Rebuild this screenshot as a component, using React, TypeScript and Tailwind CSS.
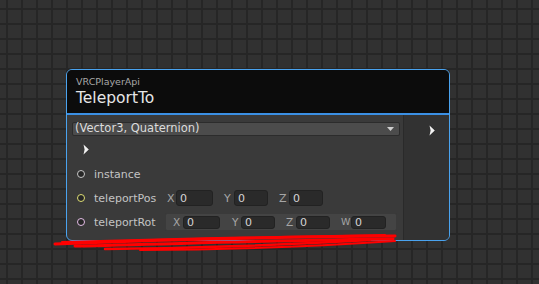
import { ReactNode } from 'react';

// graph node: VRCPlayerApi.TeleportTo

function Port({ color, children, nameWidth }: { color: string; children: ReactNode; nameWidth: string }) {
  return (
    <div className="flex items-center">
      <div className={`w-[8px] h-[8px] rounded-full border-[1.5px] bg-[#262626] ${color}`} />
      <span className={`ml-[9px] text-[11px] leading-none text-[#c4c4c4] ${nameWidth}`}>{children}</span>
    </div>
  );
}

function Field({ label, labelClass, inputWidth, height, className = '' }: { label: string; labelClass: string; inputWidth: string; height: string; className?: string }) {
  return (
    <div className={`flex items-center ${className}`}>
      <span className={`leading-none text-[#a6a6a6] ${labelClass}`}>{label}</span>
      <div className={`flex items-center pl-[3px] bg-[#2a2a2a] border border-[#222] rounded-[3px] text-[11px] leading-none text-[#d4d4d4] ${inputWidth} ${height}`}>
        0
      </div>
    </div>
  );
}

function Arrow({ className = '' }: { className?: string }) {
  return (
    <svg width="6" height="11" viewBox="0 0 6 11" className={className}>
      <polygon points="0.5,0.5 5.8,5.5 0.5,10.5 1.6,5.5" fill="#f2f2f2" />
    </svg>
  );
}

export default function App() {
  return (
    <div
      className="relative w-[539px] h-[284px] overflow-hidden bg-[#313131] bg-[image:linear-gradient(to_right,#262626_2px,transparent_2px),linear-gradient(to_bottom,#262626_2px,transparent_2px)] bg-[size:15px_15px] bg-[position:6px_8px] pt-[69px] pl-[66px]"
      style={{ fontFamily: '"DejaVu Sans", "Liberation Sans", sans-serif' }}
    >
      <div className="w-[384px] h-[172px] border border-[#4aa3ef] rounded-[6px] overflow-hidden flex flex-col bg-[#3a3a3a]">
        {/* header */}
        <div className="h-[43px] bg-[#0c0c0c] pl-[9px] pt-[7px]">
          <div className="text-[9.5px] leading-[9px] text-[#a8a8a8]">VRCPlayerApi</div>
          <div className="mt-[4px] text-[15.5px] leading-[16px] text-[#e6e6e6]">TeleportTo</div>
        </div>
        <div className="h-[2px] bg-[#3b90e4]" />

        {/* body */}
        <div className="flex flex-1">
          <div className="w-[336px] flex flex-col pt-[7px]">
            <div className="ml-[5px] mr-[3px] h-[14px] flex items-center justify-between pl-[2px] pr-[5px] bg-[#4c4c4c] border border-[#2c2c2c] rounded-[2px]">
              <span className="text-[11.5px] leading-none text-[#dcdcdc]">(Vector3, Quaternion)</span>
              <svg width="7" height="4" viewBox="0 0 7 4">
                <polygon points="0,0 7,0 3.5,4" fill="#cfcfcf" />
              </svg>
            </div>

            <Arrow className="mt-[8px] ml-[16px]" />

            <div className="mt-[12px] h-[14px] pl-[10px] flex items-center">
              <Port color="border-[#c8c8c8]" nameWidth="w-[60px]">instance</Port>
            </div>

            <div className="mt-[8px] h-[18px] pl-[10px] flex items-center">
              <Port color="border-[#dede74]" nameWidth="w-[72px]">teleportPos</Port>
              <Field label="X" labelClass="text-[11px] w-[10px] pl-[1px]" inputWidth="w-[37px]" height="h-[16px]" />
              <Field label="Y" labelClass="text-[11px] w-[10px]" inputWidth="w-[34px]" height="h-[16px]" className="ml-[11px]" />
              <Field label="Z" labelClass="text-[11px] w-[10px]" inputWidth="w-[34px]" height="h-[16px]" className="ml-[11px]" />
            </div>

            <div className="mt-[5px] h-[20px] pl-[10px] flex items-center">
              <Port color="border-[#e4bde6]" nameWidth="w-[71px]">teleportRot</Port>
              <div className="w-[232px] h-[18px] flex items-center pl-[7px] bg-[#444444] border border-[#3a3a3a] rounded-[2px]">
                <Field label="X" labelClass="text-[10.5px] w-[10px]" inputWidth="w-[37px]" height="h-[13px]" />
                <Field label="Y" labelClass="text-[10.5px] w-[9px]" inputWidth="w-[34px]" height="h-[13px]" className="ml-[12px]" />
                <Field label="Z" labelClass="text-[10.5px] w-[10px]" inputWidth="w-[34px]" height="h-[13px]" className="ml-[11px]" />
                <Field label="W" labelClass="text-[9.5px] w-[10px]" inputWidth="w-[35px]" height="h-[13px]" className="ml-[11px]" />
              </div>
            </div>
          </div>

          <div className="flex-1 bg-[#323232] border-l border-[#2a2a2a] pt-[10px] pl-[25px]">
            <Arrow />
          </div>
        </div>
      </div>

      {/* red scribble drawn over the screenshot */}
      <svg className="absolute inset-0 pointer-events-none" width="539" height="284" viewBox="0 0 539 284">
        <g fill="none" stroke="#ff0000" strokeLinecap="round">
          <path d="M55 244 C150 240 280 237 395 236" strokeWidth="3" />
          <path d="M62 242 C160 239 300 236 385 235" strokeWidth="2" />
          <path d="M75 246 C170 244 290 240 393 239" strokeWidth="3" />
          <path d="M105 249 C200 248 300 244 370 240" strokeWidth="2.5" />
          <path d="M140 250 C230 250 320 246 395 241" strokeWidth="2" />
        </g>
      </svg>
    </div>
  );
}
